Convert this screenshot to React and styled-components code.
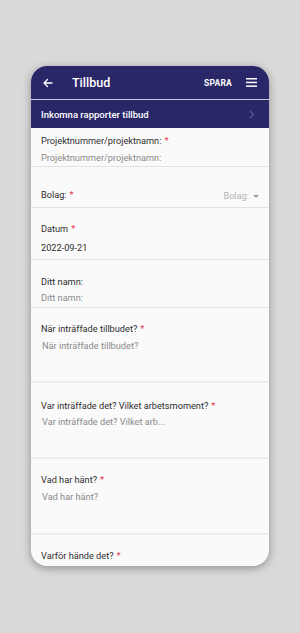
import React from 'react'
import styled, { createGlobalStyle } from 'styled-components'

const GlobalStyle = createGlobalStyle`
  html, body {
    margin: 0;
    padding: 0;
    background: #d9d9d9;
    font-family: Roboto, "Noto Sans", Arial, sans-serif;
  }
`

const Page = styled.div`
  width: 300px;
  height: 633px;
  padding-top: 66px;
  box-sizing: border-box;
  display: flex;
  justify-content: center;
`

const Phone = styled.div`
  width: 238px;
  height: 500px;
  border-radius: 16px;
  overflow: hidden;
  background: #fafafa;
  box-shadow: 0 2px 8px rgba(0, 0, 0, 0.35);
  display: flex;
  flex-direction: column;
`

const TopBar = styled.header`
  height: 33px;
  flex-shrink: 0;
  background: #2a2768;
  display: flex;
  align-items: center;
  padding: 0 12px 0 11px;
  color: #fff;
  border-bottom: 1px solid #c9c9d6;
`

const Title = styled.h1`
  flex: 1;
  margin: 0 0 0 18px;
  font-size: 12.5px;
  font-weight: 500;
`

const Save = styled.span`
  font-size: 8.5px;
  font-weight: 700;
  letter-spacing: 0.2px;
  margin-right: 14px;
`

const SubBar = styled.div`
  height: 28px;
  flex-shrink: 0;
  background: #2a2768;
  display: flex;
  align-items: center;
  justify-content: space-between;
  padding: 0 14px 0 10px;
  color: #fff;
  font-size: 9.5px;
  font-weight: 500;
`

const Row = styled.div`
  height: ${p => p.h}px;
  box-sizing: border-box;
  padding: ${p => p.top}px 10px 0 10px;
  border-bottom: ${p => (p.thick ? '2px solid #ececec' : '1px solid #e2e2e2')};
  display: flex;
  flex-direction: ${p => (p.inline ? 'row' : 'column')};
  justify-content: ${p => (p.inline ? 'space-between' : 'flex-start')};
  gap: ${p => p.gap || 0}px;
  flex-shrink: 0;
`

const Label = styled.div`
  font-size: 9.2px;
  line-height: 12px;
  color: #2e2e2e;
`

const Star = styled.span`
  color: #e53950;
  margin-left: 3px;
  font-size: 9.5px;
`

const Placeholder = styled.div`
  font-size: 9.2px;
  line-height: 12px;
  color: ${p => (p.value ? '#2e2e2e' : '#8a8a8a')};
  padding-left: ${p => (p.indent ? 1 : 0)}px;
`

const Select = styled.div`
  font-size: 9.2px;
  line-height: 12px;
  color: #b4b4b4;
  display: flex;
  align-items: center;
  gap: 4px;
  margin-top: -2px;
`

const Caret = styled.span`
  width: 0;
  height: 0;
  border-left: 3px solid transparent;
  border-right: 3px solid transparent;
  border-top: 3px solid #999;
`

const Arrow = () => (
  <svg width="12" height="12" viewBox="0 0 24 24" fill="none" stroke="#fff" strokeWidth="2.6" strokeLinecap="round" strokeLinejoin="round">
    <path d="M20 12H4M11 5l-7 7 7 7" />
  </svg>
)

const Menu = () => (
  <svg width="11" height="9" viewBox="0 0 11 9" fill="#fff">
    <rect x="0" y="0" width="11" height="1.5" />
    <rect x="0" y="3.7" width="11" height="1.5" />
    <rect x="0" y="7.4" width="11" height="1.5" />
  </svg>
)

const Chevron = () => (
  <svg width="6" height="9" viewBox="0 0 6 9" fill="none" stroke="#5c5a8c" strokeWidth="1.2">
    <path d="M1 1l3.5 3.5L1 8" />
  </svg>
)

export default function App() {
  return (
    <Page>
      <GlobalStyle />
      <Phone>
        <TopBar>
          <Arrow />
          <Title>Tillbud</Title>
          <Save>SPARA</Save>
          <Menu />
        </TopBar>
        <SubBar>
          <span>Inkomna rapporter tillbud</span>
          <Chevron />
        </SubBar>
        <Row h={39} top={7} gap={5}>
          <Label>Projektnummer/projektnamn:<Star>*</Star></Label>
          <Placeholder>Projektnummer/projektnamn:</Placeholder>
        </Row>
        <Row h={41} top={20} inline>
          <Label style={{ marginTop: 2 }}>Bolag:<Star>*</Star></Label>
          <Select>Bolag: <Caret /></Select>
        </Row>
        <Row h={52} top={15} gap={7}>
          <Label>Datum<Star>*</Star></Label>
          <Placeholder value>2022-09-21</Placeholder>
        </Row>
        <Row h={48} top={16} gap={4}>
          <Label>Ditt namn:</Label>
          <Placeholder>Ditt namn:</Placeholder>
        </Row>
        <Row h={75} top={15} gap={5} thick>
          <Label>När inträffade tillbudet?<Star>*</Star></Label>
          <Placeholder indent>När inträffade tillbudet?</Placeholder>
        </Row>
        <Row h={76} top={17} gap={4} thick>
          <Label>Var inträffade det? Vilket arbetsmoment?<Star>*</Star></Label>
          <Placeholder indent>Var inträffade det? Vilket arb...</Placeholder>
        </Row>
        <Row h={76} top={15} gap={5} thick>
          <Label>Vad har hänt?<Star>*</Star></Label>
          <Placeholder indent>Vad har hänt?</Placeholder>
        </Row>
        <Row h={76} top={15} gap={5}>
          <Label>Varför hände det?<Star>*</Star></Label>
        </Row>
      </Phone>
    </Page>
  )
}
